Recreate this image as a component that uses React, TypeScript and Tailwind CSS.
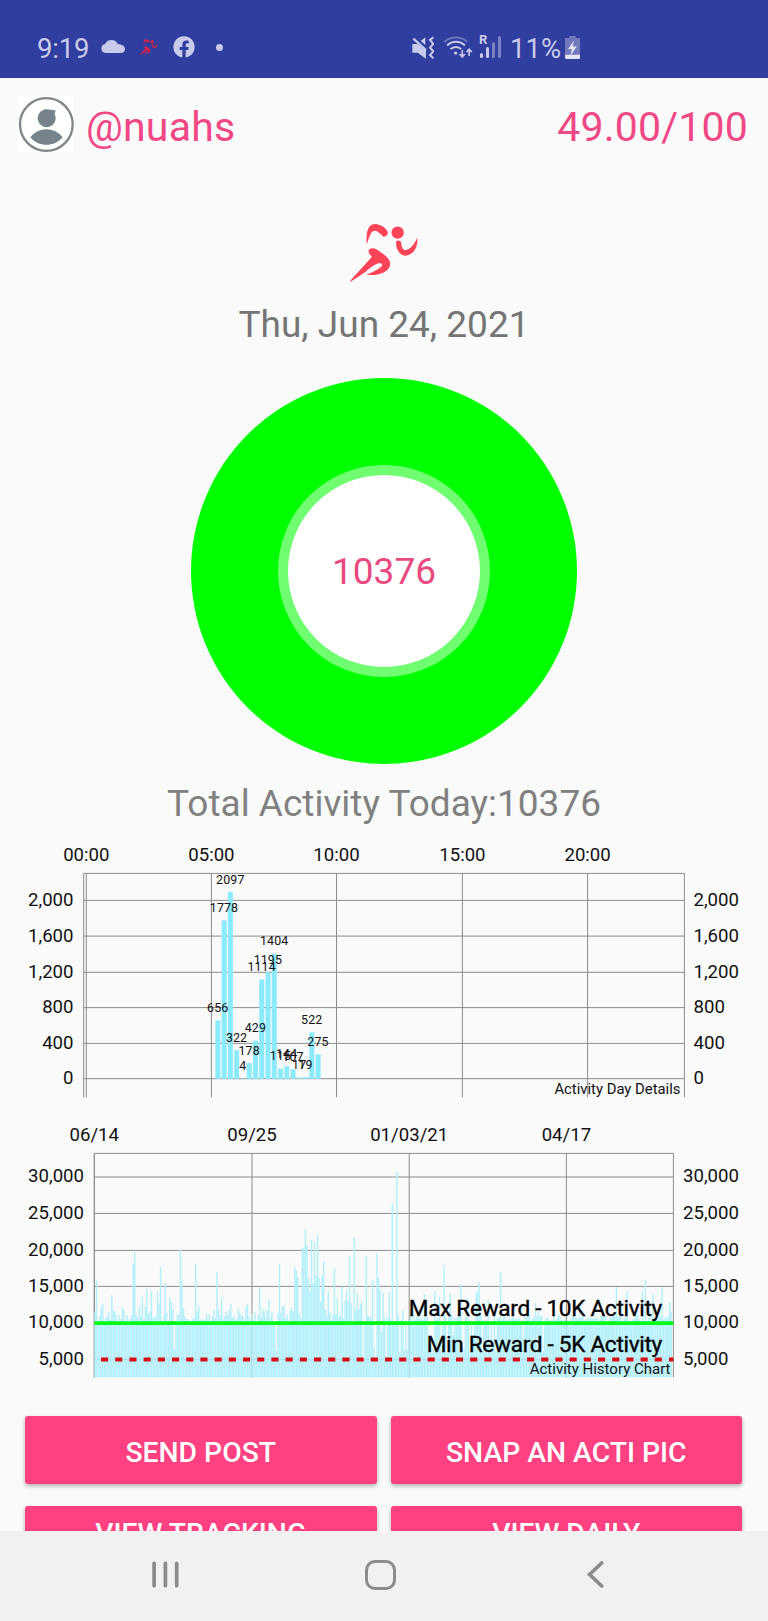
import { FaFacebook } from "react-icons/fa";

const hourly = [
  { slot: 21, steps: 656 },
  { slot: 22, steps: 1778 },
  { slot: 23, steps: 2097 },
  { slot: 24, steps: 322 },
  { slot: 25, steps: 4 },
  { slot: 26, steps: 178 },
  { slot: 27, steps: 429 },
  { slot: 28, steps: 1114 },
  { slot: 29, steps: 1195 },
  { slot: 30, steps: 1404 },
  { slot: 31, steps: 115 },
  { slot: 32, steps: 144 },
  { slot: 33, steps: 107 },
  { slot: 34, steps: 17 },
  { slot: 35, steps: 19 },
  { slot: 36, steps: 522 },
  { slot: 37, steps: 275 },
];

const dayHours = [
  { label: "00:00", x: 86.3 },
  { label: "05:00", x: 211.4 },
  { label: "10:00", x: 336.5 },
  { label: "15:00", x: 462.4 },
  { label: "20:00", x: 587.6 },
];

const dayLevels = [
  { label: "2,000", y: 70.4 },
  { label: "1,600", y: 106.1 },
  { label: "1,200", y: 142.3 },
  { label: "800", y: 177.6 },
  { label: "400", y: 213.4 },
  { label: "0", y: 248.7 },
];

const historyDates = [
  { label: "06/14", x: 94.3 },
  { label: "09/25", x: 252 },
  { label: "01/03/21", x: 409.2 },
  { label: "04/17", x: 566.4 },
];

const historyLevels = [
  { label: "30,000", y: 67 },
  { label: "25,000", y: 103.4 },
  { label: "20,000", y: 140.4 },
  { label: "15,000", y: 176.4 },
  { label: "10,000", y: 213 },
  { label: "5,000", y: 249.4 },
];

// Days that differ from the usual ~10k: [x, y] in thirds of a pixel
const marks: number[][] = [
  [285, 605], [292, 511], [302, 592], [307, 582], [326, 606], [335, 556], [340, 602], [345, 605], [350, 614],
  [368, 590], [373, 601], [380, 615], [398, 460], [402, 425], [407, 612], [420, 588], [425, 561], [434, 590],
  [439, 535], [444, 612], [449, 604], [454, 543], [468, 618], [473, 543], [478, 580], [482, 470], [495, 519],
  [500, 608], [510, 563], [515, 574], [520, 597], [525, 718], [530, 614], [543, 420], [548, 516], [552, 594],
  [586, 461], [590, 605], [595, 588], [619, 610], [630, 612], [642, 598], [652, 487], [657, 600], [665, 563],
  [680, 606], [689, 599], [694, 582], [713, 592], [717, 595], [722, 609], [737, 590], [741, 582], [755, 612],
  [764, 606], [779, 532], [788, 597], [793, 604], [803, 600], [807, 569], [816, 606], [831, 722], [835, 612],
  [840, 462], [845, 608], [850, 587], [854, 588], [869, 603], [873, 592], [878, 604], [883, 471], [887, 483],
  [892, 500], [896, 612], [905, 413], [910, 415], [915, 357], [920, 405], [925, 505], [930, 545], [934, 390],
  [939, 520], [943, 395], [948, 498], [953, 374], [958, 505], [963, 575], [967, 495], [972, 455], [977, 597],
  [986, 543], [991, 607], [1005, 474], [1010, 612], [1014, 564], [1020, 616], [1028, 530], [1033, 572],
  [1038, 541], [1043, 575], [1047, 437], [1052, 580], [1062, 381], [1067, 602], [1071, 550], [1076, 598],
  [1080, 583], [1085, 575], [1090, 745], [1099, 437], [1109, 620], [1118, 511], [1123, 710], [1128, 740],
  [1132, 430], [1137, 503], [1142, 540], [1147, 665], [1151, 548], [1157, 730], [1161, 745], [1166, 742],
  [1170, 547], [1175, 580], [1179, 282], [1189, 715], [1193, 184], [1202, 730], [1207, 603], [1212, 720],
  [1222, 720], [1275, 553], [1285, 700], [1290, 730], [1295, 730], [1300, 715], [1307, 543], [1317, 560],
  [1322, 705], [1331, 465], [1340, 730], [1350, 550], [1360, 675], [1383, 523], [1388, 730], [1393, 715],
  [1400, 565], [1411, 725], [1420, 685], [1430, 547], [1434, 545], [1438, 516], [1445, 730], [1463, 685],
  [1467, 570], [1471, 715], [1480, 700], [1488, 725], [1500, 485], [1572, 685], [1605, 580], [1615, 605],
  [1630, 725], [1740, 580], [1850, 532], [1882, 543], [1928, 543], [1938, 510], [1958, 552], [1986, 532],
  [2008, 577], [2013, 605],
];

const STEP = 4.573;
const markByDay = new Map(marks.map(([x, y]) => [Math.round((x - 285.3) / STEP), y]));
const history = Array.from({ length: 379 }, (_, day) => {
  const usual = 636 - ((day * 37 + ((day * day) % 17) * 5) % 23);
  return { day, top: markByDay.get(day) ?? usual };
});

function Runner({ className, fill }: { className: string; fill: string }) {
  return (
    <svg viewBox="388 68 210 180" className={className} fill={fill} preserveAspectRatio="none">
      <path d="M441 132C439 100 442 72 466 71C485 72 500 84 505 96C504 106 498 110 491 109C482 100 474 91 465 91C452 92 449 112 441 132Z" />
      <circle cx="534" cy="97" r="18.5" />
      <path d="M530 122C538 118 545 122 545 130C546 140 550 149 557 149C573 147 583 132 593 112C596 135 585 163 558 166C538 167 526 140 530 122Z" />
      <path d="M447 150C450 142 462 142 470 147C484 157 503 167 510 182C514 192 510 203 500 211C485 222 460 227 440 223C455 218 475 208 487 197C489 190 483 188 476 189C462 194 450 204 438 214L392 245C391 242 394 238 397 235L440 188C450 178 458 170 456 167C448 163 446 156 447 150Z" />
    </svg>
  );
}

function StatusBar() {
  return (
    <div className="flex h-[78px] shrink-0 items-start bg-[#303e9f] pt-[34px] pl-[37px] text-[#c8cbeb]">
      <span className="mt-px w-[64px] text-[27.5px] leading-[28px] tracking-[-0.2px]">9:19</span>
      <svg viewBox="0 0 24 13" className="mt-[6px] h-[13px] w-[24px]" fill="#c8cbeb">
        <path d="M4.5 13a4.5 4.5 0 0 1-.4-8.9C5.3 1.5 7.5 0 10.3 0c3.3 0 5.8 1.9 6.6 4.3C20 4.1 24 5.6 24 9.2 24 11.5 22.2 13 20 13Z" />
      </svg>
      <Runner className="mt-[5px] ml-[14px] h-[17px] w-[19px]" fill="#d81f45" />
      <FaFacebook className="mt-[2px] ml-[15px] h-[22px] w-[22px]" />
      <span className="mt-[10px] ml-[21px] h-[7px] w-[7px] rounded-full bg-[#c8cbeb]" />
      <svg viewBox="0 0 66 69" className="mt-[2px] ml-[189px] h-[23px] w-[22px]" fill="none" stroke="#c8cbeb">
        <path d="M1 24h14L42 46V68L17 50H1Z" fill="#c8cbeb" stroke="none" />
        <path d="M4 8L42 42" strokeWidth="7" />
        <path d="M15 24L42 42V55L20 50Z" fill="#c8cbeb" stroke="none" />
        <path d="M26 15L40 4V27Z" fill="#c8cbeb" stroke="none" />
        <path d="M64 4L54 12L64 24L54 35L64 46L54 57L64 67" strokeWidth="6" />
      </svg>
      <svg viewBox="0 0 90 70" className="mt-[2px] ml-[9px] h-[23px] w-[30px]" fill="none" stroke="#c8cbeb" strokeWidth="6">
        <path d="M3 18C22 0 55 0 73 18" opacity=".4" />
        <path d="M12 29C27 14 51 14 66 29" />
        <path d="M22 40C31 31 46 31 55 40" />
        <circle cx="38" cy="52" r="5" fill="#c8cbeb" stroke="none" />
        <path d="M58 43V61M50 55L58 64L66 55M79 61V42M71 49L79 40L87 49" strokeWidth="5" />
      </svg>
      <div className="relative ml-[6px] flex h-[24px] w-[22px] items-end gap-[3px]">
        <span className="absolute -top-[1px] left-0 text-[13px] leading-[14px] font-bold">R</span>
        <span className="ml-[1px] h-[5px] w-[3px] rounded-full bg-[#c8cbeb]" />
        <span className="h-[11px] w-[3px] rounded-full bg-[#c8cbeb]" />
        <span className="h-[16px] w-[3px] rounded-full bg-[#7a82c3]" />
        <span className="h-[22px] w-[3px] rounded-full bg-[#7a82c3]" />
      </div>
      <span className="mt-px ml-[9px] w-[55px] text-[27.5px] leading-[28px]">11%</span>
      <svg viewBox="0 0 46 70" className="mt-[2px] h-[23px] w-[15px]">
        <path d="M13 0H33V6H46V66Q46 70 42 70H4Q0 70 0 66V6H13Z" fill="#7279bd" />
        <path d="M0 57H46V66Q46 70 42 70H4Q0 70 0 66Z" fill="#e4e6f6" />
        <path d="M27 14L9 40H21L17 60L36 32H24Z" fill="#e4e6f6" />
      </svg>
    </div>
  );
}

function Header() {
  return (
    <header className="flex h-[122px] shrink-0 items-start pr-[20px] pl-[18px] text-[41px] leading-[48px] text-[#ef4885]">
      <svg viewBox="54 288 168 168" className="mt-[18px] h-[56px] w-[56px] bg-white">
        <circle cx="139" cy="373.5" r="79" fill="none" stroke="#80868a" strokeWidth="7" />
        <path d="M168 331C163 337 164 341 166 347A27 27 0 1 1 131 329C142 325 155 331 168 331Z" fill="#76838a" />
        <path d="M91 412C115 380 163 380 188 412C163 442 115 442 91 412Z" fill="#76838a" />
      </svg>
      <span className="mt-[25px] ml-[12px] tracking-[0.2px]">@nuahs</span>
      <span className="mt-[25px] ml-auto tracking-[0.2px]">49.00/100</span>
    </header>
  );
}

function DayChart() {
  return (
    <svg viewBox="0 0 768 280" className="h-[280px] w-full shrink-0" fontSize="18.6" fill="#111">
      <g stroke="#8c8c8c" strokeWidth="1">
        <path d="M83.7 43.4H684.4M83.7 43.4V267.4M684.4 43.4V267.4" fill="none" />
        {dayLevels.map((l) => (
          <line key={l.label} x1="83.7" x2="684.4" y1={l.y} y2={l.y} />
        ))}
        {dayHours.map((h) => (
          <line key={h.label} x1={h.x} x2={h.x} y1="43.4" y2="267.4" />
        ))}
      </g>
      {dayHours.map((h) => (
        <text key={h.label} x={h.x} y="31.2" textAnchor="middle">{h.label}</text>
      ))}
      {dayLevels.map((l) => (
        <g key={l.label}>
          <text x="73.5" y={l.y + 5.6} textAnchor="end">{l.label}</text>
          <text x="693.5" y={l.y + 5.6}>{l.label}</text>
        </g>
      ))}
      {hourly.map((h) => (
        <rect
          key={h.slot}
          x={83.6 + h.slot * 6.265 + 0.2}
          y={248.9 - h.steps * 0.0892}
          width="5"
          height={h.steps * 0.0892}
          fill="#8ceafd"
        />
      ))}
      {hourly.map((h) => (
        <text
          key={h.slot}
          x={86.2 + h.slot * 6.265}
          y={240.7 - h.steps * 0.0892}
          fontSize="12.4"
          letterSpacing=".15"
          textAnchor="middle"
        >
          {h.steps}
        </text>
      ))}
      <text x="680.5" y="264.2" fontSize="14.85" textAnchor="end">Activity Day Details</text>
    </svg>
  );
}

function HistoryChart() {
  return (
    <svg viewBox="0 0 768 290" className="h-[290px] w-full shrink-0" fontSize="18.6" fill="#111">
      <g stroke="#8c8c8c" strokeWidth="1">
        <path d="M94.3 43.4H673.4M94.3 43.4V267.4M673.4 43.4V267.4" fill="none" />
        {historyLevels.map((l) => (
          <line key={l.label} x1="94.3" x2="673.4" y1={l.y} y2={l.y} />
        ))}
        {historyDates.map((d) => (
          <line key={d.label} x1={d.x} x2={d.x} y1="43.4" y2="267.4" />
        ))}
      </g>
      {historyDates.map((d) => (
        <text key={d.label} x={d.x} y="31.2" textAnchor="middle">{d.label}</text>
      ))}
      {historyLevels.map((l) => (
        <g key={l.label}>
          <text x="84" y={l.y + 5.3} textAnchor="end">{l.label}</text>
          <text x="683" y={l.y + 5.3}>{l.label}</text>
        </g>
      ))}
      <g transform="scale(0.33333)" fill="#b4f0fa">
        {history.map((h) => (
          <rect key={h.day} x={283 + h.day * STEP} y={h.top} width="4.35" height={802 - h.top} />
        ))}
      </g>
      <line x1="94.3" x2="673.4" y1="213.2" y2="213.2" stroke="#00fa12" strokeWidth="3.8" />
      <line x1="101" x2="673.4" y1="249.5" y2="249.5" stroke="#d80a14" strokeWidth="3.8" strokeDasharray="7.1 7.1" />
      <g fontSize="22.6" fill="#000" stroke="#000" strokeWidth=".35" letterSpacing="-.3" textAnchor="end">
        <text x="662" y="205.7">Max Reward - 10K Activity</text>
        <text x="662" y="242">Min Reward - 5K Activity</text>
      </g>
      <text x="670.5" y="264.2" fontSize="15" textAnchor="end">Activity History Chart</text>
    </svg>
  );
}

const button =
  "flex h-[68px] justify-center rounded-[3px] bg-[#ff4081] text-[28.3px] leading-[33px] font-medium text-white shadow-[0_2px_4px_rgba(0,0,0,0.3)]";

export default function App() {
  return (
    <div className="flex h-[1621px] w-[768px] flex-col overflow-hidden bg-[#fafafa] font-['Roboto',sans-serif]">
      <StatusBar />
      <Header />
      <main className="flex h-[1331px] shrink-0 flex-col overflow-hidden">
        <Runner className="mt-[23px] ml-[349px] h-[60px] w-[70px] shrink-0" fill="#ff4458" />
        <p className="mt-[20px] text-center text-[37px] leading-[44px] text-[#757575]">Thu, Jun 24, 2021</p>
        <div className="mx-auto mt-[31px] flex h-[386px] w-[386px] shrink-0 items-center justify-center rounded-full bg-[#00ff00]">
          <div className="flex h-[212px] w-[212px] items-center justify-center rounded-full border-[10px] border-[#70ff70] bg-white pt-[2px] text-[37px] text-[#e84a80]">
            10376
          </div>
        </div>
        <p className="mt-[18px] text-center text-[37px] leading-[44px] text-[#808080]">Total Activity Today:10376</p>
        <div className="mt-[4px] flex shrink-0 flex-col">
          <DayChart />
          <HistoryChart />
        </div>
        <div className="mt-[16px] grid shrink-0 grid-cols-2 gap-x-[14px] gap-y-[22px] pr-[26px] pl-[25px]">
          <button className={`${button} pt-[20px]`}>SEND POST</button>
          <button className={`${button} pt-[20px]`}>SNAP AN ACTI PIC</button>
          <button className={`${button} pt-[11px]`}>VIEW TRACKING</button>
          <button className={`${button} pt-[11px]`}>VIEW DAILY</button>
        </div>
      </main>
      <nav className="flex h-[90px] shrink-0 items-start bg-[#f1f1f1] pt-[29px] pl-[151px]">
        <svg viewBox="0 0 28 30" className="h-[30px] w-[28px]" stroke="#8b8b8b" strokeWidth="3.7" strokeLinecap="round">
          <path d="M3.1 3.3V25.7M14.4 3.3V25.7M25.7 3.3V25.7" />
        </svg>
        <span className="ml-[186px] h-[30px] w-[31px] rounded-[10px] border-[3px] border-[#8b8b8b]" />
        <svg viewBox="0 0 18 30" className="ml-[190px] h-[30px] w-[18px]" fill="none" stroke="#8b8b8b" strokeWidth="3.7" strokeLinecap="round">
          <path d="M15.7 3L3.6 14.5L15.7 26" />
        </svg>
      </nav>
    </div>
  );
}
